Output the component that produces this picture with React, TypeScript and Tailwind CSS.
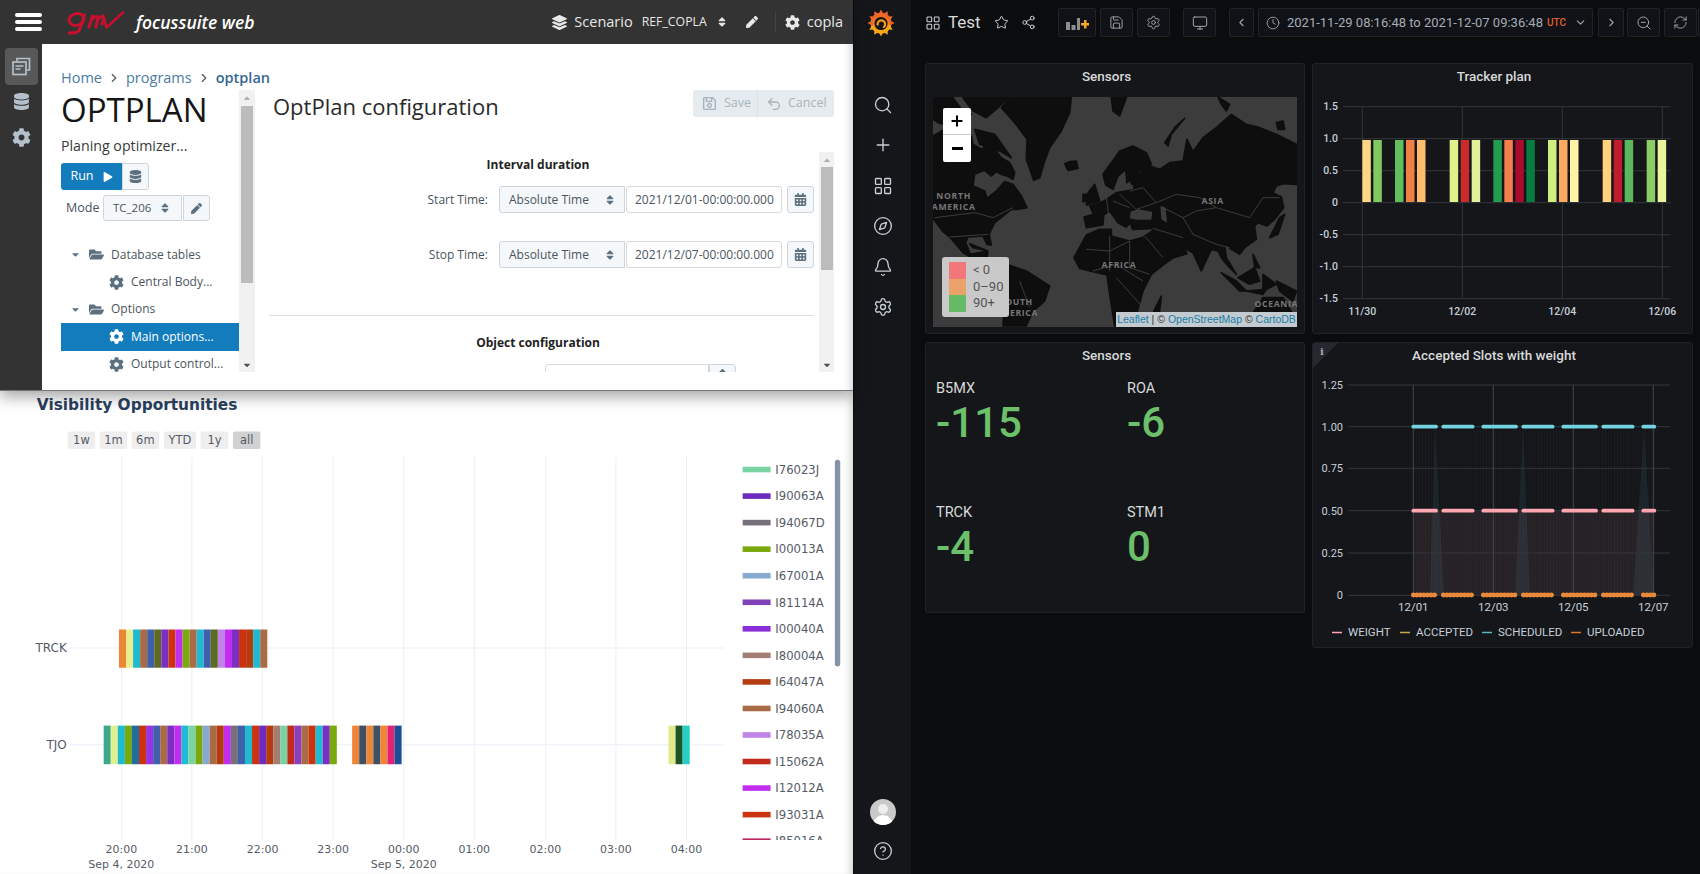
import type { ReactNode } from "react";
import {
  Bell,
  ChevronDown,
  ChevronLeft,
  ChevronRight,
  CircleHelp,
  Clock,
  Compass,
  LayoutGrid,
  Monitor,
  Plus,
  RefreshCw,
  Save,
  Search,
  Settings,
  Share2,
  Star,
  Undo2,
  ZoomOut,
} from "lucide-react";
import {
  FaCalendarAlt,
  FaCaretDown,
  FaCaretUp,
  FaCog,
  FaDatabase,
  FaFolderOpen,
  FaLayerGroup,
  FaPen,
  FaPlay,
  FaRegSave,
  FaSort,
} from "react-icons/fa";

const orange = "#ed8536";
const cyan = "#1fbad0";
const brown = "#a96b46";
const blue = "#4060ab";
const olive = "#5e6a1f";
const purple = "#7b2fc2";
const red = "#c9340f";
const magenta = "#c22ef0";
const green = "#7aa90d";
const rust = "#b53c10";
const mint = "#79d3a2";

const TRCK_BARS = [
  orange, "#e8ee8f", cyan, brown, blue, olive, purple, red, magenta, green, brown,
  cyan, blue, olive, "#c083e8", magenta, purple, red, rust, cyan, brown,
];
const TJO_BARS = [
  "#3ea88c", "#dff08f", cyan, "#77a812", "#1f6f9e", red, "#9a33e0", blue, brown, purple, magenta,
  cyan, mint, green, "#88aad0", brown, rust, magenta, "#76707a", blue, cyan, red,
  "#6f2bbf", rust, "#a47e72", mint, "#c22a1a", "#8a3fc0", brown, red, cyan, purple, green,
];
const TJO_BARS_2 = [orange, "#3e5068", orange, "#3e5068", "#f28535", "#df2475", "#1d4f97"];
const TJO_BARS_3 = ["#e3e98a", "#1e5528", "#24d0c4"];

const LEGEND: [string, string][] = [
  ["I76023J", mint],
  ["I90063A", "#6a2cc0"],
  ["I94067D", "#76707a"],
  ["I00013A", green],
  ["I67001A", "#88aad0"],
  ["I81114A", "#8040b8"],
  ["I00040A", "#8a2fd8"],
  ["I80004A", "#a47e72"],
  ["I64047A", rust],
  ["I94060A", brown],
  ["I78035A", "#c083e8"],
  ["I15062A", "#c22a1a"],
  ["I12012A", magenta],
  ["I93031A", red],
  ["I85016A", "#c0245e"],
];

const TICKS: [number, string][] = [
  [120.7, "20:00"],
  [191.4, "21:00"],
  [262.3, "22:00"],
  [333, "23:00"],
  [403.7, "00:00"],
  [474.4, "01:00"],
  [545.6, "02:00"],
  [616.3, "03:00"],
  [687, "04:00"],
];

const RANGE: [number, number, string, boolean][] = [
  [67, 27.5, "1w", false],
  [99, 27.5, "1m", false],
  [131, 27.5, "6m", false],
  [163.5, 32, "YTD", false],
  [200, 28, "1y", false],
  [232.5, 27.5, "all", true],
];

function Segments({ x, y, h, colors }: { x: number; y: number; h: number; colors: string[] }) {
  return (
    <>
      {colors.map((c, i) => (
        <rect key={i} x={x + i * 7.08} y={y} width={7.08} height={h} fill={c} />
      ))}
    </>
  );
}

// plotly gantt below the window
function VisibilityChart() {
  const tick = { fontFamily: "'DejaVu Sans', sans-serif", fontSize: 11, fill: "#555b66" };
  return (
    <svg viewBox="0 390 853 484" className="block h-[484px] w-[853px]">
      <defs>
        <clipPath id="legend-clip">
          <rect x="740" y="455" width="90" height="385" />
        </clipPath>
      </defs>
      <text x="36" y="409" fontFamily="'DejaVu Sans', sans-serif" fontWeight="700" fontSize="15.4" fill="#2a3f5f">
        Visibility Opportunities
      </text>
      {RANGE.map(([x, w, label, active]) => (
        <g key={label}>
          <rect x={x} y={430.7} width={w} height={17.5} rx={2} fill={active ? "#d0d1d3" : "#eeeeef"} />
          <text x={x + w / 2} y={443.5} textAnchor="middle" {...tick} fontSize={11.5}>
            {label}
          </text>
        </g>
      ))}
      {TICKS.map(([x]) => (
        <line key={x} x1={x} x2={x} y1={456} y2={840} stroke="#ebf0f8" />
      ))}
      <line x1={69} x2={725} y1={647.5} y2={647.5} stroke="#ebf0f8" />
      <line x1={69} x2={725} y1={744.5} y2={744.5} stroke="#ebf0f8" />
      <Segments x={118.3} y={629} h={38.3} colors={TRCK_BARS} />
      <Segments x={103} y={725.3} h={38.7} colors={TJO_BARS} />
      <Segments x={352} y={725.3} h={38.7} colors={TJO_BARS_2} />
      <Segments x={669} y={725.3} h={38.7} colors={TJO_BARS_3} />
      <text x={66} y={651.5} textAnchor="end" {...tick} fontSize={12}>
        TRCK
      </text>
      <text x={66} y={748.5} textAnchor="end" {...tick} fontSize={12}>
        TJO
      </text>
      {TICKS.map(([x, label]) => (
        <text key={label} x={x} y={853} textAnchor="middle" {...tick}>
          {label}
        </text>
      ))}
      <text x={120.7} y={867.5} textAnchor="middle" {...tick}>
        Sep 4, 2020
      </text>
      <text x={403.7} y={867.5} textAnchor="middle" {...tick}>
        Sep 5, 2020
      </text>
      <g clipPath="url(#legend-clip)">
        {LEGEND.map(([label, color], i) => (
          <g key={label}>
            <rect x={743.3} y={465.9 + i * 26.6} width={28} height={5.6} fill={color} />
            <text x={776} y={473 + i * 26.6} fontFamily="'DejaVu Sans', sans-serif" fontSize="11.7" fill="#555b66">
              {label}
            </text>
          </g>
        ))}
      </g>
      <rect x={835.7} y={459} width={5.4} height={207} rx={2.7} fill="#8592a8" />
    </svg>
  );
}

function RailIcon() {
  return (
    <svg width="19" height="19" viewBox="0 0 19 19" fill="none" stroke="#b4c0cc" strokeWidth="1.7">
      <path d="M5 4V1.5h12.5V13H15" />
      <rect x="1" y="5" width="13" height="12.5" />
      <path d="M3.5 9h8M3.5 12h5" />
    </svg>
  );
}

function GmvLogo() {
  return (
    <svg width="60" height="25" viewBox="0 0 60 25" fill="none" stroke="#c8102e" strokeWidth="3" strokeLinecap="round" strokeLinejoin="round">
      <ellipse cx="11.5" cy="9.5" rx="7.5" ry="5.8" transform="rotate(-14 11.5 9.5)" />
      <path d="M19.5 5 15 18.5c-1 3.6-5 5-11 4.5" />
      <path d="M24 17l3.5-11M27 9.5c3-3.5 6-4 5.8-.8L31 17M33 9c3-3.5 6-3.8 5.8-.5L37 14" />
      <path d="M38 5.5l3.5 12L58 2.5" strokeWidth="2.6" />
    </svg>
  );
}

function TreeRow({
  folder,
  selected,
  children,
}: {
  folder?: boolean;
  selected?: boolean;
  children: ReactNode;
}) {
  return (
    <div
      className={`flex h-[27.4px] items-center text-[12px] whitespace-nowrap ${
        selected ? "bg-[#137cbd] text-white" : "text-[#4a5560]"
      }`}
    >
      {folder ? (
        <>
          <FaCaretDown className="ml-[9px] text-[11px] text-[#5c7080]" />
          <FaFolderOpen className="ml-[8px] text-[15px] text-[#5c7080]" />
          <span className="ml-[7px]">{children}</span>
        </>
      ) : (
        <>
          <FaCog className={`ml-[48px] text-[15px] ${selected ? "text-white" : "text-[#5c7080]"}`} />
          <span className="ml-[7px]">{children}</span>
        </>
      )}
    </div>
  );
}

function ScrollTrack({ thumbTop, thumbHeight, className }: { thumbTop: string; thumbHeight: string; className: string }) {
  return (
    <div className={`flex shrink-0 flex-col items-center bg-[#f1f1f1] ${className}`}>
      <div className="flex h-[15px] items-center text-[10px] text-[#b0b0b0]">
        <FaCaretUp />
      </div>
      <div className={`w-[12px] bg-[#bcbcbc] ${thumbTop} ${thumbHeight}`} />
      <div className="mt-auto flex h-[15px] items-center text-[10px] text-[#505050]">
        <FaCaretDown />
      </div>
    </div>
  );
}

function TimeRow({ label, value }: { label: string; value: string }) {
  return (
    <div className="flex h-[27px] items-center text-[12px] whitespace-nowrap text-[#4a5560]">
      <span className="w-[219px] text-right">{label}</span>
      <div className="ml-[11px] flex h-[27px] w-[126px] items-center justify-between rounded-l-[3px] border border-[#cfd5da] bg-[#f5f8fa] pr-[8px] pl-[9px]">
        Absolute Time
        <FaSort className="text-[12px] text-[#5c7080]" />
      </div>
      <div className="ml-px flex h-[27px] w-[156px] items-center rounded-[3px] border border-[#d5dade] bg-white pl-[8px]">
        {value}
      </div>
      <div className="ml-[5px] flex h-[27px] w-[27px] items-center justify-center rounded-[3px] border border-[#cfd5da] bg-[#f5f8fa]">
        <FaCalendarAlt className="text-[13px] text-[#5c7080]" />
      </div>
    </div>
  );
}

function FocusWindow() {
  return (
    <div className="relative z-10 h-[391px] w-[853px] shrink-0 border-b border-[#777] shadow-[0_6px_14px_rgba(0,0,0,0.35)]">
      <header className="flex h-[44px] items-center bg-[#333333] whitespace-nowrap text-[#e8e8e8]">
        <div className="ml-[15px] flex w-[27px] flex-col gap-[3.5px]">
          <div className="h-[3.5px] rounded-sm bg-white" />
          <div className="h-[3.5px] rounded-sm bg-white" />
          <div className="h-[3.5px] rounded-sm bg-white" />
        </div>
        <div className="ml-[23px]">
          <GmvLogo />
        </div>
        <span className="ml-[11px] text-[17.5px] font-semibold text-white italic">focussuite web</span>
        <div className="ml-auto flex items-center pr-[10px]">
          <FaLayerGroup className="text-[15px]" />
          <span className="ml-[7px] text-[14.5px]">Scenario</span>
          <span className="ml-[9px] text-[12.3px]">REF_COPLA</span>
          <FaSort className="ml-[9px] text-[12px]" />
          <FaPen className="ml-[18px] text-[12px]" />
          <div className="ml-[17px] h-[20px] w-px bg-[#444]" />
          <FaCog className="ml-[9px] text-[15px]" />
          <span className="ml-[7px] text-[14.5px]">copla</span>
        </div>
      </header>
      <div className="flex h-[346px]">
        <nav className="flex w-[42px] shrink-0 flex-col items-center bg-[#333333] pt-[4px]">
          <div className="flex h-[37px] w-[33px] items-center justify-center rounded-sm bg-[#585858]">
            <RailIcon />
          </div>
          <FaDatabase className="mt-[8px] text-[17px] text-[#b4c0cc]" />
          <FaCog className="mt-[18px] text-[19px] text-[#b4c0cc]" />
        </nav>
        <main className="flex-1 overflow-hidden bg-white pt-[24px] shadow-[inset_-8px_0_8px_-6px_rgba(0,0,0,0.2)]">
          <div className="flex h-[20px] items-center pl-[19px] text-[14.5px] text-[#4b7ba5]">
            Home
            <ChevronRight size={14} strokeWidth={2} className="mx-[5px] text-[#555]" />
            programs
            <ChevronRight size={14} strokeWidth={2} className="mx-[5px] text-[#555]" />
            <span className="font-semibold text-[#336791]">optplan</span>
          </div>
          <div className="mt-[2px] ml-[19px] flex h-[282px]">
            <section className="flex w-[194px] shrink-0">
              <div className="w-[178px]">
                <h1 className="h-[40px] text-[33px] leading-[40px] text-[#151515]">OPTPLAN</h1>
                <p className="mt-[5px] h-[22px] text-[14.2px] leading-[22px] font-medium text-[#3a3a3a]">
                  Planing optimizer...
                </p>
                <div className="mt-[6px] flex h-[27px]">
                  <div className="flex w-[61px] items-center justify-center gap-[9px] rounded-l-[3px] bg-[#137cbd] text-[12.5px] text-white">
                    Run <FaPlay className="text-[10px]" />
                  </div>
                  <div className="flex w-[27px] items-center justify-center rounded-r-[3px] border border-[#cfd5da] bg-[#f5f8fa]">
                    <FaDatabase className="text-[13px] text-[#5c7080]" />
                  </div>
                </div>
                <div className="mt-[5px] flex h-[26px] items-center text-[12.5px] text-[#4a5560]">
                  <span className="ml-[5px] w-[37px]">Mode</span>
                  <div className="flex h-[26px] w-[79px] items-center justify-between rounded-l-[3px] border border-[#cfd5da] bg-[#f5f8fa] pr-[10px] pl-[9px] text-[11.5px]">
                    TC_206
                    <FaSort className="text-[12px] text-[#5c7080]" />
                  </div>
                  <div className="ml-px flex h-[26px] w-[27px] items-center justify-center rounded-r-[3px] border border-[#cfd5da] bg-[#f5f8fa]">
                    <FaPen className="text-[11px] text-[#5c7080]" />
                  </div>
                </div>
                <div className="mt-[20px] h-[131px] overflow-hidden">
                  <TreeRow folder>Database tables</TreeRow>
                  <TreeRow>Central Body...</TreeRow>
                  <TreeRow folder>Options</TreeRow>
                  <TreeRow selected>Main options...</TreeRow>
                  <TreeRow>Output control...</TreeRow>
                </div>
              </div>
              <ScrollTrack className="w-[16px]" thumbTop="mt-px" thumbHeight="h-[177px]" />
            </section>
            <section className="ml-[14px] flex w-[565px] shrink-0 flex-col">
              <div className="flex h-[62px] items-start justify-between pl-[4px]">
                <h2 className="text-[22px] leading-[32px] text-[#2a2a2a]">OptPlan configuration</h2>
                <div className="flex h-[27px] w-[141px] items-center rounded-[3px] bg-[#e5ebef] text-[12.5px] text-[#aab4bc]">
                  <FaRegSave className="ml-[9px] text-[15px]" />
                  <span className="ml-[7px] w-[33px]">Save</span>
                  <div className="h-full w-px bg-[#dbe1e5]" />
                  <Undo2 size={16} className="ml-[8px]" />
                  <span className="ml-[6px]">Cancel</span>
                </div>
              </div>
              <div className="flex h-[220px]">
                <div className="w-[550px] shrink-0 overflow-hidden pt-[5px]">
                  <h3 className="h-[16px] w-[538px] text-center text-[12px] leading-[16px] font-bold text-[#222]">
                    Interval duration
                  </h3>
                  <div className="mt-[13px]">
                    <TimeRow label="Start Time:" value="2021/12/01-00:00:00.000" />
                  </div>
                  <div className="mt-[28px]">
                    <TimeRow label="Stop Time:" value="2021/12/07-00:00:00.000" />
                  </div>
                  <div className="mt-[47px] h-px w-[545px] bg-[#dcdfe2]" />
                  <h3 className="mt-[19px] h-[16px] w-[538px] text-center text-[12px] leading-[16px] font-bold text-[#222]">
                    Object configuration
                  </h3>
                  <div className="mt-[13px] ml-[276px] flex h-[27px]">
                    <div className="w-[164px] rounded-l-[3px] border border-[#d5dade] bg-white" />
                    <div className="flex w-[27px] justify-center rounded-r-[3px] border border-[#cfd5da] bg-[#f5f8fa] text-[11px] text-[#5c7080]">
                      <FaCaretUp />
                    </div>
                  </div>
                </div>
                <ScrollTrack className="w-[15px]" thumbTop="mt-0" thumbHeight="h-[103px]" />
              </div>
            </section>
          </div>
        </main>
      </div>
    </div>
  );
}

function GrafanaLogo() {
  const teeth = Array.from({ length: 12 }, (_, i) => i * 30);
  return (
    <svg width="28" height="28" viewBox="0 0 28 28">
      <defs>
        <linearGradient id="gf-flame" gradientUnits="userSpaceOnUse" x1="14" y1="27" x2="14" y2="1">
          <stop offset="0" stopColor="#fcc20f" />
          <stop offset="1" stopColor="#ef4f23" />
        </linearGradient>
      </defs>
      <g fill="url(#gf-flame)">
        <circle cx="14" cy="14" r="10.5" />
      </g>
      {teeth.map((r) => (
        <polygon
          key={r}
          points="11,6 14,0.5 17,6"
          fill={r > 90 && r < 270 ? "#f9a51a" : "#f0642a"}
          transform={`rotate(${r} 14 14)`}
        />
      ))}
      <circle cx="14" cy="14.5" r="6.6" fill="#141619" />
      <path d="M10.6 15.5a3.8 3.8 0 1 1 6.3 2.5" fill="none" stroke="#f7941d" strokeWidth="2.3" strokeLinecap="round" />
    </svg>
  );
}

function AddPanelIcon() {
  return (
    <svg width="24" height="16" viewBox="0 0 24 16">
      <path d="M1 7h4v8H1zM6.5 10h4v5h-4zM12 3h3v12h-3z" fill="#8e8e8e" />
      <path d="M16 8h3V5h2.5v3h2.5v2.5h-2.5v3H19v-3h-3z" fill="#f7a81d" />
    </svg>
  );
}

function TopButton({ width, margin, children }: { width: string; margin: string; children: ReactNode }) {
  return (
    <div
      className={`flex h-[29px] shrink-0 items-center justify-center rounded-[2px] border border-[#202226] bg-[#111217] text-[#c7d0d9] ${width} ${margin}`}
    >
      {children}
    </div>
  );
}

function Panel({ title, className, children }: { title: string; className: string; children: ReactNode }) {
  return (
    <section className={`relative overflow-hidden rounded-[3px] border border-[#202226] bg-[#141619] ${className}`}>
      <h3 className="h-[26px] pr-[17px] text-center text-[13.5px] leading-[24px] font-medium text-[#d8d9da]">
        {title}
      </h3>
      {children}
    </section>
  );
}

const LAND = [
  "10,125 45,105 75,130 100,135 125,125 130,150 155,165 175,150 195,165 215,190 240,205 255,235 250,255 232,245 215,240 200,232 185,245 165,228 135,240 130,275 165,290 172,312 200,290 225,262 250,270 275,305 292,340 262,345 245,345 220,365 195,385 178,420 185,452 172,450 160,425 115,428 108,445 122,480 175,470 172,490 190,505 170,505 135,495 100,475 60,428 40,412 10,372",
  "10,10 70,10 95,45 125,60 90,75 60,95 25,85 10,75",
  "100,10 235,10 205,40 170,70 130,50",
  "135,105 195,120 245,190 215,172 150,150",
  "215,40 240,10 425,8 420,55 395,110 360,160 345,200 330,250 312,258 290,195 292,135 255,85",
  "405,208 420,202 440,200 445,222 415,228",
  "545,10 590,10 570,65 550,50",
  "865,8 900,30 890,50 875,30",
  "1040,85 1060,80 1065,105 1045,105",
  "705,145 735,100 765,72 725,120 715,155",
  "610,285 625,240 660,215 690,225 720,205 760,200 772,135 790,172 820,130 860,100 905,60 950,90 990,100 1040,120 1100,150 1100,270 1062,268 1040,275 1030,295 1055,308 1062,340 1035,375 1012,395 985,385 975,395 980,435 945,460 930,480 905,465 885,450 890,490 920,540 895,515 875,490 865,470 845,465 815,530 790,475 762,460 772,478 732,490 700,512 672,492 645,425 680,402 608,405 602,385 590,398 570,362 588,398 565,385 540,350 522,362 520,392 470,400 463,368 492,360 480,335 520,322 560,295",
  "520,240 545,205 570,170 610,155 650,175 665,210 625,232 612,270 592,272 588,225 565,245 550,285 528,272",
  "475,295 495,270 510,320 470,332",
  "460,300 478,300 475,320 460,322",
  "433,490 470,422 510,405 545,405 545,425 600,440 642,428 672,492 700,512 665,540 640,590 622,655 580,695 555,695 540,600 532,542 490,532 450,522",
  "675,645 695,605 690,650 670,660",
  "875,535 920,560 950,590 930,590",
  "925,550 975,520 990,560 960,570",
  "1000,540 1040,570 1000,590",
  "1040,560 1100,590 1090,620 1050,590",
  "950,590 1010,585 1000,600",
  "1050,370 1065,360 1045,420 1020,430",
  "970,480 990,520 975,520",
  "945,695 1000,610 1060,610 1090,660 1102,695",
  "230,510 290,530 360,575 345,620 310,650 290,695 220,695 225,600 215,540",
  "120,448 170,468 130,460",
];

const WATER = [
  "603,352 625,345 668,352 665,376 620,376 600,372",
  "692,335 708,340 712,385 695,375",
  "560,292 612,283 600,262 575,278",
];

const BORDERS = [
  "15,370 135,355 190,370 250,340",
  "680,325 740,300 810,310 860,340 960,370 1000,310 1050,310",
  "700,340 760,370 800,350 860,340",
  "760,370 790,420 860,450 900,460",
  "530,310 540,385",
  "570,300 620,345 680,325",
  "600,290 640,280 680,325",
  "550,320 600,340",
  "470,465 540,470 600,440",
  "540,425 540,530",
  "600,440 600,520 660,540",
  "490,530 560,510 640,560",
  "560,550 640,640",
  "645,425 700,490",
  "670,402 760,430",
  "60,428 175,420",
  "270,560 300,640",
];

const MAP_LABELS: [number, number, string][] = [
  [72, 314, "NORTH"],
  [72, 348, "AMERICA"],
  [849, 330, "ASIA"],
  [568, 520, "AFRICA"],
  [260, 632, "SOUTH"],
  [260, 666, "AMERICA"],
  [1040, 638, "OCEANIA"],
];

function SensorMap() {
  return (
    <div className="relative mx-[7px] h-[230px] w-[364px] overflow-hidden bg-[#3c3c3c]">
      <svg viewBox="10 8 1092 690" className="block h-[230px] w-[364px]">
        {LAND.map((p) => (
          <polygon key={p} points={p} fill="#0e0e0e" stroke="#0e0e0e" strokeWidth="5" strokeLinejoin="round" />
        ))}
        {WATER.map((p) => (
          <polygon key={p} points={p} fill="#3c3c3c" />
        ))}
        {BORDERS.map((p) => (
          <polyline key={p} points={p} fill="none" stroke="#444444" strokeWidth="2.5" />
        ))}
        {MAP_LABELS.map(([x, y, label]) => (
          <text
            key={label + x}
            x={x}
            y={y}
            textAnchor="middle"
            fontFamily="'Open Sans', sans-serif"
            fontWeight="700"
            fontSize="26"
            letterSpacing="2"
            fill="#767676"
          >
            {label}
          </text>
        ))}
      </svg>
      <div className="absolute top-[11px] left-[10px] w-[28px] overflow-hidden rounded-[2px] bg-white text-black">
        <div className="flex h-[27px] items-center justify-center border-b border-[#ccc]">
          <Plus size={16} strokeWidth={3} />
        </div>
        <div className="flex h-[27px] items-center justify-center">
          <div className="h-[2.5px] w-[11px] bg-black" />
        </div>
      </div>
      <div className="absolute top-[160px] left-[9px] flex h-[60px] w-[67px] items-center gap-[7px] rounded-[3px] bg-[#c9c9c9] pl-[7px] text-[13px] leading-[16.5px] text-[#555]">
        <div>
          <div className="h-[16.5px] w-[17px] bg-[#f2777a]" />
          <div className="h-[16.5px] w-[17px] bg-[#eba26a]" />
          <div className="h-[16.5px] w-[17px] bg-[#66bb66]" />
        </div>
        <div>
          <div>&lt; 0</div>
          <div>0–90</div>
          <div>90+</div>
        </div>
      </div>
      <div className="absolute right-0 bottom-0 flex h-[15px] w-[181px] items-center justify-center bg-[#c3cbd0] font-['Liberation_Sans',sans-serif] text-[10.5px] whitespace-pre text-[#333]">
        <span className="text-[#1c7ea6]">Leaflet</span>
        {" | © "}
        <span className="text-[#1c7ea6]">OpenStreetMap</span>
        {" © "}
        <span className="text-[#1c7ea6]">CartoDB</span>
      </div>
    </div>
  );
}

const TRACKER_BARS: [number, string][] = [
  [247, "#ffd684"],
  [280, "#82c860"],
  [345, "#62bd5e"],
  [378, "#f18045"],
  [411, "#ffbd6c"],
  [509, "#e0f08c"],
  [542, "#ca2b2b"],
  [575, "#e2f09a"],
  [640, "#249c50"],
  [673, "#f47e4c"],
  [706, "#a80b2e"],
  [739, "#067d40"],
  [804, "#cfee82"],
  [837, "#fbab60"],
  [870, "#fff3a6"],
  [968, "#ffd27f"],
  [1001, "#bf1d2c"],
  [1034, "#5cb85c"],
  [1100, "#8ccc66"],
  [1133, "#e8f59c"],
];

const chartText = { fontFamily: "Roboto, sans-serif", fontSize: 11.5, fill: "#c7d0d9" };

function TrackerChart() {
  const rows: [number, string][] = [
    [106.7, "1.5"],
    [138.7, "1.0"],
    [170.7, "0.5"],
    [202.7, "0"],
    [234.7, "-0.5"],
    [266.7, "-1.0"],
    [298.7, "-1.5"],
  ];
  const cols: [number, string][] = [
    [1362.3, "11/30"],
    [1462.3, "12/02"],
    [1562.3, "12/04"],
    [1662.3, "12/06"],
  ];
  return (
    <svg viewBox="1313 90 379 243" className="block h-[243px] w-[379px]">
      {rows.map(([y, label]) => (
        <g key={label}>
          <line x1={1342.7} x2={1670.7} y1={y} y2={y} stroke="#33363b" />
          <text x={1338} y={y + 3.5} textAnchor="end" {...chartText} fontSize={10.5} fontWeight={500}>
            {label}
          </text>
        </g>
      ))}
      {cols.map(([x, label]) => (
        <g key={label}>
          <line x1={x} x2={x} y1={106.7} y2={298.7} stroke="#33363b" />
          <text x={x} y={315} textAnchor="middle" {...chartText} fontSize={10.5} fontWeight={500}>
            {label}
          </text>
        </g>
      ))}
      {TRACKER_BARS.map(([x, color]) => (
        <rect key={x} x={1280 + x / 3} y={140} width={8.5} height={62} fill={color} />
      ))}
    </svg>
  );
}

const SLOT_RANGES: [number, number][] = [
  [340, 408],
  [430, 518],
  [550, 648],
  [670, 758],
  [790, 888],
  [910, 998],
  [1030, 1063],
];

// faint per-sample stems under the pink and cyan series
const SLOT_STEMS = Array.from({ length: 80 }, (_, i) => 1413.3 + i * 3.05);

function SlotsChart() {
  const rows: [number, string][] = [
    [385, "1.25"],
    [426.7, "1.00"],
    [468.3, "0.75"],
    [510.7, "0.50"],
    [553, "0.25"],
    [595.3, "0"],
  ];
  const cols: [number, string][] = [
    [1413.3, "12/01"],
    [1493.3, "12/03"],
    [1573.3, "12/05"],
    [1653.3, "12/07"],
  ];
  const px = (v: number) => 1300 + v / 3;
  const legend: [number, number, string, string][] = [
    [1332, 1348, "#ffa6b0", "WEIGHT"],
    [1400, 1416, "#cca64a", "ACCEPTED"],
    [1482, 1498, "#5fb4c4", "SCHEDULED"],
    [1571, 1587, "#e0752d", "UPLOADED"],
  ];
  return (
    <svg viewBox="1313 369 379 278" className="block h-[278px] w-[379px]">
      <rect x={1413.3} y={510.7} width={241} height={84.6} fill="#ffa6b0" fillOpacity="0.08" />
      {SLOT_STEMS.map((x) => (
        <line key={x} x1={x} x2={x} y1={430} y2={595} stroke="#c7d0d9" strokeOpacity="0.035" />
      ))}
      {[
        "1435,427 1430,595 1444,595",
        "1523,427 1515,595 1530,595",
        "1644,427 1633,595 1654,595",
      ].map((p) => (
        <polygon key={p} points={p} fill="#73d2e0" fillOpacity="0.08" />
      ))}
      {rows.map(([y, label]) => (
        <g key={label}>
          <line x1={1347.7} x2={1670} y1={y} y2={y} stroke="#33363b" />
          <text x={1343} y={y + 4} textAnchor="end" {...chartText} fontSize={11}>
            {label}
          </text>
        </g>
      ))}
      {cols.map(([x, label]) => (
        <g key={label}>
          <line x1={x} x2={x} y1={385} y2={595.3} stroke="#43464b" />
          <text x={x} y={611} textAnchor="middle" {...chartText}>
            {label}
          </text>
        </g>
      ))}
      {SLOT_RANGES.map(([a, b]) => (
        <g key={a} fill="none" strokeLinecap="round">
          <line x1={px(a)} x2={px(b)} y1={426.7} y2={426.7} stroke="#73d2e0" strokeWidth="3.8" />
          <line x1={px(a)} x2={px(b)} y1={510.7} y2={510.7} stroke="#ffa6b0" strokeWidth="3.8" />
          <line x1={px(a)} x2={px(b)} y1={595} y2={595} stroke="#e8883a" strokeWidth="2.5" />
          <line x1={px(a)} x2={px(b)} y1={595} y2={595} stroke="#e8883a" strokeWidth="4.8" strokeDasharray="0.1 3.4" />
        </g>
      ))}
      {legend.map(([x, tx, color, label]) => (
        <g key={label}>
          <line x1={x} x2={x + 10} y1={632.5} y2={632.5} stroke={color} strokeWidth="1.5" />
          <text x={tx} y={636} {...chartText}>
            {label}
          </text>
        </g>
      ))}
    </svg>
  );
}

function Stat({ label, value }: { label: string; value: string }) {
  return (
    <div className="h-[123.7px]">
      <div className="h-[18px] text-[14.5px] leading-[18px] text-[#d8d9da]">{label}</div>
      <div className="mt-[2px] h-[46px] text-[42px] leading-[46px] font-medium text-[#6cc06a]">{value}</div>
    </div>
  );
}

function GrafanaSidebar() {
  const icon = "text-[#c7d0d9]";
  return (
    <aside className="flex w-[57px] shrink-0 flex-col items-center bg-[#141619]">
      <div className="mt-[9px] mr-[3px]">
        <GrafanaLogo />
      </div>
      <div className="mt-[58px] flex flex-col items-center gap-[20.4px]">
        <Search size={20} strokeWidth={1.6} className={icon} />
        <Plus size={20} strokeWidth={1.6} className={icon} />
        <LayoutGrid size={20} strokeWidth={1.6} className={icon} />
        <Compass size={20} strokeWidth={1.6} className={icon} />
        <Bell size={20} strokeWidth={1.6} className={icon} />
        <Settings size={20} strokeWidth={1.6} className={icon} />
      </div>
      <div className="relative mt-auto h-[26px] w-[26px] overflow-hidden rounded-full bg-[#c9c9c9]">
        <div className="mx-auto mt-[5px] h-[10px] w-[10px] rounded-full bg-[#eeeeee]" />
        <div className="mx-auto mt-[1px] h-[14px] w-[20px] rounded-t-full bg-white" />
      </div>
      <CircleHelp size={20} strokeWidth={1.6} className={`mt-[16px] mb-[13px] ${icon}`} />
    </aside>
  );
}

function GrafanaTopBar() {
  return (
    <div className="flex h-[37px] items-start overflow-hidden pt-[8px] pl-[14px] text-[#c7d0d9]">
      <div className="flex h-[29px] shrink-0 items-center">
        <LayoutGrid size={16} strokeWidth={1.6} />
        <span className="ml-[7px] w-[36px] text-[17px] text-[#d8d9da]">Test</span>
        <Star size={15} strokeWidth={1.6} className="ml-[10px]" />
        <Share2 size={15} strokeWidth={1.6} className="ml-[12px]" />
      </div>
      <TopButton width="w-[38px]" margin="ml-[22px]">
        <AddPanelIcon />
      </TopButton>
      <TopButton width="w-[33px]" margin="ml-[4px]">
        <Save size={15} strokeWidth={1.5} className="text-[#a0a6ad]" />
      </TopButton>
      <TopButton width="w-[33px]" margin="ml-[4px]">
        <Settings size={15} strokeWidth={1.5} className="text-[#a0a6ad]" />
      </TopButton>
      <TopButton width="w-[33px]" margin="ml-[13px]">
        <Monitor size={16} strokeWidth={1.5} className="text-[#a0a6ad]" />
      </TopButton>
      <TopButton width="w-[25px]" margin="ml-[13px]">
        <ChevronLeft size={13} className="text-[#a0a6ad]" />
      </TopButton>
      <div className="ml-[4px] flex h-[29px] w-[335px] shrink-0 items-center rounded-[2px] border border-[#202226] bg-[#111217] pr-[5px] pl-[7px]">
        <Clock size={14} strokeWidth={1.5} className="text-[#a0a6ad]" />
        <span className="ml-[7px] text-[13px] whitespace-nowrap text-[#a5acb6]">
          2021-11-29 08:16:48 to 2021-12-07 09:36:48
        </span>
        <span className="ml-[4px] text-[10px] font-medium text-[#e8602c]">UTC</span>
        <ChevronDown size={13} className="ml-auto text-[#a0a6ad]" />
      </div>
      <TopButton width="w-[26px]" margin="ml-[5px]">
        <ChevronRight size={13} className="text-[#a0a6ad]" />
      </TopButton>
      <TopButton width="w-[33px]" margin="ml-[3px]">
        <ZoomOut size={16} strokeWidth={1.5} className="text-[#a0a6ad]" />
      </TopButton>
      <TopButton width="w-[33px]" margin="ml-[4px]">
        <RefreshCw size={15} strokeWidth={1.5} className="text-[#a0a6ad]" />
      </TopButton>
      <TopButton width="w-[33px]" margin="ml-[1px]">
        <span />
      </TopButton>
    </div>
  );
}

export default function App() {
  return (
    <div className="flex h-[874px] w-[1700px] overflow-hidden font-['Open_Sans',sans-serif]">
      <div className="flex h-[874px] w-[853px] shrink-0 flex-col bg-white shadow-[inset_-8px_0_8px_-6px_rgba(0,0,0,0.2)]">
        <FocusWindow />
        <VisibilityChart />
      </div>
      <div className="flex flex-1 border-l border-[#0b0c0e] font-['Roboto',sans-serif]">
        <GrafanaSidebar />
        <div className="min-w-0 flex-1 bg-[#0b0c0e]">
          <GrafanaTopBar />
          <div className="mt-[26px] flex items-start gap-[7px] pl-[14px]">
            <div className="flex w-[380px] flex-col gap-[8px]">
              <Panel title="Sensors" className="h-[271px]">
                <div className="pt-[7px]">
                  <SensorMap />
                </div>
              </Panel>
              <Panel title="Sensors" className="h-[271px]">
                <div className="grid grid-cols-[191px_1fr] px-[10px] pt-[11px]">
                  <Stat label="B5MX" value="-115" />
                  <Stat label="ROA" value="-6" />
                  <Stat label="TRCK" value="-4" />
                  <Stat label="STM1" value="0" />
                </div>
              </Panel>
            </div>
            <div className="flex w-[381px] flex-col gap-[8px]">
              <Panel title="Tracker plan" className="h-[271px]">
                <TrackerChart />
              </Panel>
              <Panel title="Accepted Slots with weight" className="h-[306px]">
                <div className="absolute top-0 left-0 h-0 w-0 border-t-[25px] border-r-[25px] border-t-[#25282e] border-r-transparent" />
                <span className="absolute top-[1px] left-[7px] font-['DejaVu_Serif',serif] text-[10px] font-bold text-[#9fa7b3]">
                  i
                </span>
                <SlotsChart />
              </Panel>
            </div>
          </div>
        </div>
      </div>
    </div>
  );
}
